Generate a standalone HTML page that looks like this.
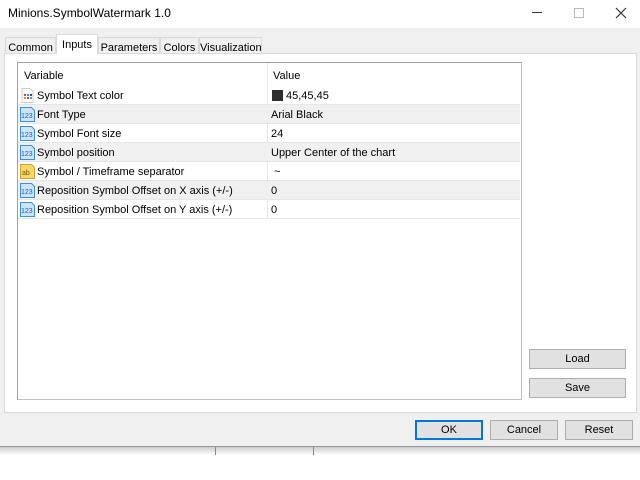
<!DOCTYPE html><html><head><style>
*{margin:0;padding:0;box-sizing:border-box}
body{width:640px;height:480px;background:#fff;font-family:"Liberation Sans",sans-serif;font-size:11px;color:#000;position:relative;overflow:hidden}
.a{position:absolute}
.btn{position:absolute;background:#e1e1e1;border:1px solid #adadad;text-align:center;line-height:19px;font-size:11px}
.row{position:absolute;left:18px;width:502px;height:19px;border-bottom:1px solid #e6e6e6}
.row span{position:absolute;top:4px}
.ic{position:absolute;left:2px;top:2px;width:15px;height:15px}
.g{background:#f0f0f0}
.tab{position:absolute;top:37px;height:17px;border:1px solid #d9d9d9;background:#f0f0f0;padding-top:4px;text-align:center}
</style></head><body>
<div class="a" style="left:8px;top:6px;font-size:12px">Minions.SymbolWatermark 1.0</div>
<div class="a" style="left:532px;top:12px;width:10px;height:1px;background:#333"></div>
<div class="a" style="left:574px;top:8px;width:10px;height:10px;border:1px solid #bbb"></div>
<svg class="a" style="left:615px;top:7px" width="12" height="12"><path d="M1 1L11 11M11 1L1 11" stroke="#333" stroke-width="1.2"/></svg>
<div class="a" style="left:0;top:28px;width:640px;height:419px;background:#f0f0f0;border-bottom:1px solid #999"></div>
<div class="a" style="left:0;top:447px;width:640px;height:8px;background:linear-gradient(#ccc,#fff)"></div>
<div class="a" style="left:215px;top:447px;width:1px;height:8px;background:#888"></div>
<div class="a" style="left:313px;top:447px;width:1px;height:8px;background:#888"></div>
<div class="a" style="left:4px;top:53px;width:633px;height:360px;background:#fff;border:1px solid #d9d9d9"></div>
<div class="tab" style="left:5px;width:51px">Common</div>
<div class="tab" style="left:56px;top:34px;height:20px;width:42px;border-bottom:none;background:#fff">Inputs</div>
<div class="tab" style="left:98px;width:62px">Parameters</div>
<div class="tab" style="left:160px;width:39px">Colors</div>
<div class="tab" style="left:199px;width:63px">Visualization</div>
<div class="a" style="left:17px;top:62px;width:505px;height:338px;border:1px solid #a0a0a0;border-right-color:#c0c0c0;border-bottom-color:#c0c0c0;background:#fff"></div>
<div class="a" style="left:267px;top:63px;width:1px;height:155px;background:#e6e6e6"></div>
<div class="a" style="left:24px;top:70px">Variable</div>
<div class="a" style="left:273px;top:70px">Value</div>
<div class="row" style="top:86px"><svg class="ic" viewBox="0 0 15 15"><path d="M2 0.5h8l3 3v11h-11z" fill="#fff" stroke="#ccc"/><rect x="4" y="6" width="2" height="2" fill="#e33"/><rect x="7" y="6" width="2" height="2" fill="#3a3"/><rect x="10" y="6" width="2" height="2" fill="#33e"/><rect x="4" y="9" width="2" height="2" fill="#e90"/><rect x="7" y="9" width="2" height="2" fill="#a3a"/><rect x="10" y="9" width="2" height="2" fill="#3aa"/></svg><span style="left:19px">Symbol Text color</span><div class="a" style="left:254px;top:4px;width:11px;height:11px;background:#2d2d2d"></div><span style="left:268px">45,45,45</span></div>
<div class="row g" style="top:105px"><svg class="ic" viewBox="0 0 15 15"><path d="M0.5 0.5h11l3 3v11h-14z" fill="#cde4fb" stroke="#3b8ee0"/><text x="1" y="11" font-size="7" fill="#1a5fb4" font-family="Liberation Sans">123</text></svg><span style="left:19px">Font Type</span><span style="left:253px">Arial Black</span></div>
<div class="row" style="top:124px"><svg class="ic" viewBox="0 0 15 15"><path d="M0.5 0.5h11l3 3v11h-14z" fill="#cde4fb" stroke="#3b8ee0"/><text x="1" y="11" font-size="7" fill="#1a5fb4" font-family="Liberation Sans">123</text></svg><span style="left:19px">Symbol Font size</span><span style="left:253px">24</span></div>
<div class="row g" style="top:143px"><svg class="ic" viewBox="0 0 15 15"><path d="M0.5 0.5h11l3 3v11h-14z" fill="#cde4fb" stroke="#3b8ee0"/><text x="1" y="11" font-size="7" fill="#1a5fb4" font-family="Liberation Sans">123</text></svg><span style="left:19px">Symbol position</span><span style="left:253px">Upper Center of the chart</span></div>
<div class="row" style="top:162px"><svg class="ic" viewBox="0 0 15 15"><path d="M0.5 0.5h11l3 3v11h-14z" fill="#f7d76a" stroke="#d4a020"/><text x="2" y="11" font-size="7" fill="#7a5500" font-family="Liberation Sans">ab</text></svg><span style="left:19px">Symbol / Timeframe separator</span><span style="left:256px">~</span></div>
<div class="row g" style="top:181px"><svg class="ic" viewBox="0 0 15 15"><path d="M0.5 0.5h11l3 3v11h-14z" fill="#cde4fb" stroke="#3b8ee0"/><text x="1" y="11" font-size="7" fill="#1a5fb4" font-family="Liberation Sans">123</text></svg><span style="left:19px">Reposition Symbol Offset on X axis (+/-)</span><span style="left:253px">0</span></div>
<div class="row" style="top:200px"><svg class="ic" viewBox="0 0 15 15"><path d="M0.5 0.5h11l3 3v11h-14z" fill="#cde4fb" stroke="#3b8ee0"/><text x="1" y="11" font-size="7" fill="#1a5fb4" font-family="Liberation Sans">123</text></svg><span style="left:19px">Reposition Symbol Offset on Y axis (+/-)</span><span style="left:253px">0</span></div>
<div class="btn" style="left:529px;top:349px;width:97px;height:20px">Load</div>
<div class="btn" style="left:529px;top:378px;width:97px;height:20px">Save</div>
<div class="btn" style="left:415px;top:420px;width:68px;height:20px;border:2px solid #0078d7;line-height:17px">OK</div>
<div class="btn" style="left:490px;top:420px;width:68px;height:20px">Cancel</div>
<div class="btn" style="left:565px;top:420px;width:68px;height:20px">Reset</div>
</body></html>
